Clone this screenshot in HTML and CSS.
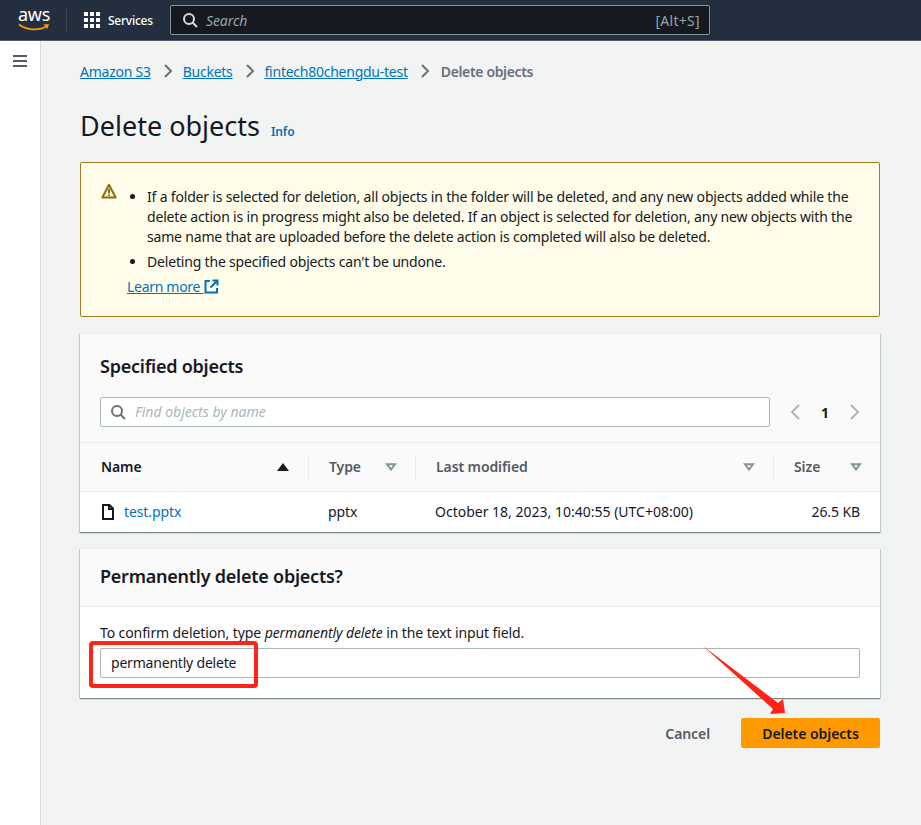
FILE: index.html
```html
<!DOCTYPE html>
<html lang="en">
<head>
  <meta charset="UTF-8">
  <title>Delete objects</title>
  <link rel="stylesheet" href="styles.css">
</head>
<body>

<header class="topbar">
  <div class="logo">
    <span class="logo-text">aws</span>
    <svg class="logo-smile" width="32" height="9" viewBox="0 0 32 9"><path d="M1 1.5C9 7.500 21 8 29 3" fill="none" stroke="#ff9900" stroke-width="1.8"/><path d="M25.500 1.500L31 1l-1.500 5z" fill="#ff9900"/></svg>
  </div>
  <div class="topbar-sep"></div>
  <svg class="grid-icon" width="16" height="16" viewBox="0 0 16 16" fill="#fff">
    <rect width="4" height="4"/><rect x="6" width="4" height="4"/><rect x="12" width="4" height="4"/>
    <rect y="6" width="4" height="4"/><rect x="6" y="6" width="4" height="4"/><rect x="12" y="6" width="4" height="4"/>
    <rect y="12" width="4" height="4"/><rect x="6" y="12" width="4" height="4"/><rect x="12" y="12" width="4" height="4"/>
  </svg>
  <span class="services">Services</span>
  <div class="top-search">
    <svg width="16" height="16" viewBox="0 0 16 16" fill="none" stroke="#d5dbdb" stroke-width="2"><circle cx="7" cy="7" r="5"/><path d="M10.500 10.500L15 15"/></svg>
    <span class="top-search-text">Search</span>
    <span class="top-search-key">[Alt+S]</span>
  </div>
</header>

<div class="shell">
  <aside class="sidebar">
    <svg class="menu-icon" width="14" height="12" viewBox="0 0 14 12" fill="#545b64"><rect width="14" height="2"/><rect y="5" width="14" height="2"/><rect y="10" width="14" height="2"/></svg>
  </aside>

  <main class="content">
    <nav class="crumbs">
      <a href="#">Amazon S3</a>
      <svg class="crumb-arrow" width="10" height="16" viewBox="0 0 10 16"><path d="M2 2l6 6-6 6" fill="none" stroke="#687078" stroke-width="2"/></svg>
      <a href="#">Buckets</a>
      <svg class="crumb-arrow" width="10" height="16" viewBox="0 0 10 16"><path d="M2 2l6 6-6 6" fill="none" stroke="#687078" stroke-width="2"/></svg>
      <a href="#">fintech80chengdu-test</a>
      <svg class="crumb-arrow" width="10" height="16" viewBox="0 0 10 16"><path d="M2 2l6 6-6 6" fill="none" stroke="#687078" stroke-width="2"/></svg>
      <span class="crumb-current">Delete objects</span>
    </nav>

    <div class="page-title">
      <h1>Delete objects</h1>
      <a class="info" href="#">Info</a>
    </div>

    <section class="alert">
      <svg class="alert-icon" width="16" height="16" viewBox="0 0 16 16"><path d="M8 1.800L1.400 14.500h13.200z" fill="none" stroke="#906806" stroke-width="2" stroke-linejoin="round"/><path d="M8 6v4.500M8 11.500v1.500" stroke="#906806" stroke-width="2"/></svg>
      <div class="alert-body">
        <ul>
          <li>If a folder is selected for deletion, all objects in the folder will be deleted, and any new objects added while the delete action is in progress might also be deleted. If an object is selected for deletion, any new objects with the same name that are uploaded before the delete action is completed will also be deleted.</li>
          <li>Deleting the specified objects can't be undone.</li>
        </ul>
        <a class="learn" href="#">Learn more&nbsp;</a><svg class="ext-icon" width="15" height="15" viewBox="0 0 15 15" fill="none" stroke="#0073bb" stroke-width="2"><path d="M6 2H1.500v11.500H13V9"/><path d="M8.500 1.500H13.500V6.500M13 2L6.500 8.500"/></svg>
      </div>
    </section>

    <section class="card">
      <div class="card-head specified-head">
        <h2>Specified objects</h2>
        <div class="filter-row">
          <div class="filter">
            <svg width="16" height="16" viewBox="0 0 16 16" fill="none" stroke="#687078" stroke-width="2"><circle cx="7" cy="7" r="5"/><path d="M10.500 10.500L15 15"/></svg>
            <span>Find objects by name</span>
          </div>
          <div class="pager">
            <svg width="12" height="16" viewBox="0 0 12 16"><path d="M9 1L2 8l7 7" fill="none" stroke="#aab7b8" stroke-width="2"/></svg>
            <b>1</b>
            <svg width="12" height="16" viewBox="0 0 12 16"><path d="M3 1l7 7-7 7" fill="none" stroke="#aab7b8" stroke-width="2"/></svg>
          </div>
        </div>
      </div>
      <div class="table-row table-head">
        <div class="col col-name sorted">Name<svg width="12" height="8" viewBox="0 0 12 8"><path d="M6 0l6 8H0z" fill="#16191f"/></svg></div>
        <div class="col col-type">Type<svg width="12" height="8" viewBox="0 0 12 8"><path d="M2 1.200h8L6 6.500z" fill="none" stroke="#879596" stroke-width="2"/></svg></div>
        <div class="col col-date">Last modified<svg width="12" height="8" viewBox="0 0 12 8"><path d="M2 1.200h8L6 6.500z" fill="none" stroke="#879596" stroke-width="2"/></svg></div>
        <div class="col col-size">Size<svg width="12" height="8" viewBox="0 0 12 8"><path d="M2 1.200h8L6 6.500z" fill="none" stroke="#879596" stroke-width="2"/></svg></div>
      </div>
      <div class="table-row table-body">
        <div class="cell col-name">
          <svg width="14" height="16" viewBox="0 0 14 16" fill="none" stroke="#16191f" stroke-width="2"><path d="M2 1h6.500L12 4.500V15H2z"/><path d="M8 1v4h4"/></svg>
          <a href="#">test.pptx</a>
        </div>
        <div class="cell col-type">pptx</div>
        <div class="cell col-date">October 18, 2023, 10:40:55 (UTC+08:00)</div>
        <div class="cell col-size">26.5 KB</div>
      </div>
    </section>

    <section class="card">
      <div class="card-head confirm-head">
        <h2>Permanently delete objects?</h2>
      </div>
      <div class="confirm-body">
        <div class="confirm-label">To confirm deletion, type <i>permanently delete</i> in the text input field.</div>
        <div class="confirm-input">permanently delete</div>
      </div>
    </section>

    <div class="actions">
      <a class="cancel" href="#">Cancel</a>
      <button type="button" class="primary">Delete objects</button>
    </div>
  </main>
</div>

<!-- screenshot annotations -->
<div class="mark-box"></div>
<svg class="mark-arrow" width="84" height="70" viewBox="0 0 84 70"><path d="M0 0L75 57L80 53L82 67L67 68L70 63z" fill="#ff2318"/></svg>

</body>
</html>
```

FILE: styles.css
```css
* { box-sizing: border-box; }
body { margin: 0; height: 825px; overflow: hidden; background: #f2f3f3; color: #16191f; font-family: "Noto Sans", Arial, sans-serif; font-size: 14px; letter-spacing: -0.1px; position: relative; }
a { color: #0073bb; }
h1, h2 { margin: 0; }

.topbar { height: 41px; background: #232f3e; border-bottom: 1px solid #545b64; display: flex; align-items: center; padding-left: 18px; color: #fff; }
.logo { width: 32px; height: 32px; position: relative; }
.logo-text { display: block; text-align: center; font-size: 18px; line-height: 20px; letter-spacing: -0.3px; }
.logo-smile { display: block; margin-top: -1px; }
.topbar-sep { width: 1px; height: 22px; background: #414750; margin: 0 17px 0 16px; }
.grid-icon { flex: none; }
.services { font-size: 12px; font-weight: 500; margin-left: 8px; width: 54px; letter-spacing: -0.25px; }
.top-search { width: 540px; height: 30px; background: #16191f; border: 1px solid #879596; border-radius: 2px; display: flex; align-items: center; padding: 0 9px 0 11px; margin-left: 8px; }
.top-search-text { font-style: italic; font-size: 14px; color: #95a5a6; margin-left: 8px; }
.top-search-key { margin-left: auto; font-size: 14px; color: #95a5a6; letter-spacing: 0.3px; }

.shell { display: flex; height: 784px; }
.sidebar { width: 41px; flex: none; background: #fff; border-right: 1px solid #d5dbdb; padding: 14px 0 0 13px; }
.menu-icon { display: block; }
.content { flex: 1; min-width: 0; padding: 0 41px 0 39px; }

.crumbs { display: flex; align-items: center; height: 22px; margin-top: 19px; letter-spacing: -0.25px; }
.crumb-arrow { margin: 0 10px 0 12px; }
.crumb-current { color: #687078; font-weight: 600; letter-spacing: -0.35px; margin-left: 1px; }

.page-title { display: flex; align-items: baseline; margin-top: 26px; height: 45px; }
.page-title h1 { font-size: 27px; font-weight: 400; line-height: 36px; letter-spacing: 0; }
.info { font-size: 12px; font-weight: 600; margin-left: 11px; text-decoration: none; }

.alert { margin-top: 9px; height: 155px; background: #fffce9; border: 1px solid #a17c1d; border-radius: 2px; display: flex; padding: 20px 19px 0 20px; }
.alert-icon { flex: none; display: block; }
.alert-body { margin: 4px 0 0 10px; line-height: 20px; flex: 1; }
.alert-body ul { margin: 0; padding-left: 20px; letter-spacing: -0.18px; }
.alert-body li { margin-bottom: 5px; }
.learn { letter-spacing: -0.3px; }
.ext-icon { vertical-align: -2px; margin-left: 1px; }

.card { background: #fff; margin-top: 16px; box-shadow: 0 1px 1px 0 rgba(0, 28, 36, 0.3), 1px 1px 1px 0 rgba(0, 28, 36, 0.15), -1px 1px 1px 0 rgba(0, 28, 36, 0.15); border-top: 1px solid #eaeded; }
.card-head { background: #fafafa; border-bottom: 1px solid #eaeded; }
.card-head h2 { font-size: 18px; font-weight: 600; line-height: 24px; letter-spacing: -0.24px; }
.specified-head { height: 109px; padding: 20px 20px 0; }
.filter-row { display: flex; align-items: center; margin-top: 19px; }
.filter { width: 670px; height: 30px; background: #fff; border: 1px solid #aab7b8; border-radius: 2px; display: flex; align-items: center; padding-left: 9px; color: #aab7b8; font-style: italic; }
.filter span { margin: 0 0 2px 9px; letter-spacing: 0; }
.pager { display: flex; align-items: center; margin-left: 20px; }
.pager svg { display: block; }
.pager b { font-size: 14px; width: 46px; text-align: center; color: #16191f; }

.table-row { display: flex; }
.table-head { height: 49px; background: #fafafa; border-bottom: 1px solid #eaeded; align-items: center; font-weight: 600; color: #545b64; padding-bottom: 1px; }
.table-body { height: 40px; align-items: center; padding-bottom: 1px; }
.col-name { width: 229px; padding-left: 21px; }
.col-type { width: 107px; padding-left: 20px; }
.col-date { width: 358px; padding-left: 20px; }
.col-size { width: 106px; padding-left: 20px; }
.col { display: flex; align-items: center; justify-content: space-between; height: 24px; padding-right: 18px; border-right: 1px solid #eaeded; }
.col.col-name { padding-right: 19px; color: #16191f; }
.col.col-size { border-right: 0; }
.cell.col-name { display: flex; align-items: center; gap: 9px; }
.cell.col-name a { text-decoration: none; }
.cell.col-type { padding-left: 19px; }
.cell.col-date { padding-left: 19px; letter-spacing: 0; }
.cell.col-size { text-align: right; padding-right: 20px; }

.confirm-head { height: 58px; padding: 15px 20px 0; }
.confirm-body { height: 91px; padding: 16px 20px 0; }
.confirm-label { line-height: 20px; }
.confirm-input { height: 30px; margin-top: 5px; background: #fff; border: 1px solid #aab7b8; border-radius: 2px; padding-left: 10px; line-height: 28px; letter-spacing: -0.2px; }

.actions { display: flex; justify-content: flex-end; align-items: center; margin-top: 20px; }
.cancel { color: #545b64; font-weight: 600; text-decoration: none; margin-right: 31px; }
.primary { width: 139px; height: 30px; background: #ff9900; border: 0; border-radius: 2px; color: #16191f; font-family: inherit; font-size: 14px; font-weight: 600; letter-spacing: -0.05px; padding: 0; }

.mark-box { position: absolute; left: 89px; top: 641px; width: 169px; height: 47px; border: 4px solid #ff2318; border-radius: 4px; }
.mark-arrow { position: absolute; left: 703px; top: 646px; }
```
